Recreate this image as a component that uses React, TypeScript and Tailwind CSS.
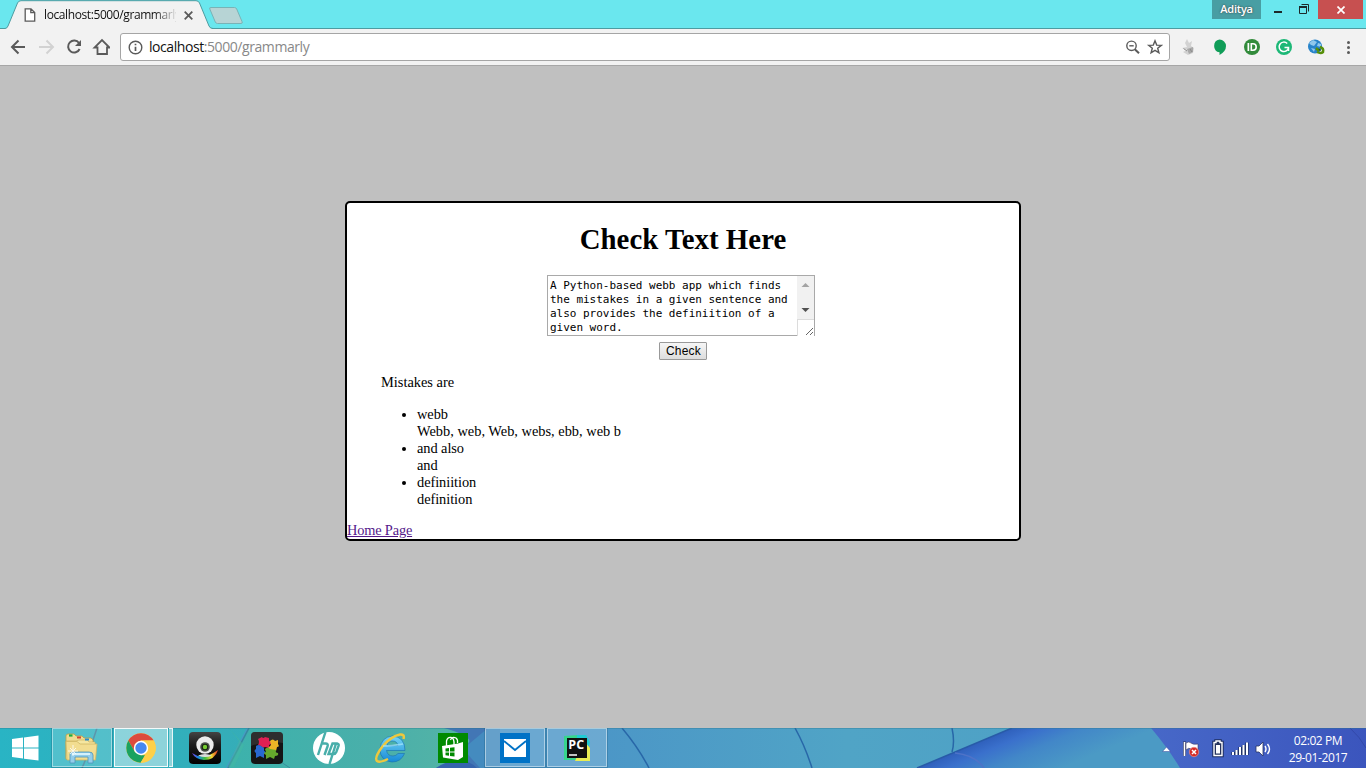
import React from "react";

const ui = "font-['Open_Sans','Noto_Sans',sans-serif]";

function Tab() {
  return (
    <div className="relative flex h-[29px] w-[212px] shrink-0 items-center">
      <svg className="absolute left-0 top-0" width="214" height="29" viewBox="0 0 214 29">
        <path d="M0 29V28.5H5Q7 28.5 8 26L17.500 3Q18.500 .7 21 .7H196Q198.500 .7 199.500 3L209 26Q210 28.500 212 28.500V29Z" fill="#f2f2f2" />
        <path d="M0 28.500H5Q7 28.500 8 26L17.500 3Q18.500 .7 21 .7H196Q198.500 .7 199.500 3L209 26Q210 28.500 213 28.500" fill="none" stroke="#4d9ca1" />
      </svg>
      <svg className="relative ml-[24px] mt-px" width="12" height="14" viewBox="0 0 12 14" fill="#fff" stroke="#5a5a5a" strokeWidth="1.3">
        <path d="M1.200 .8H7L10.700 4.500V13.200H1.200ZM6.800 .8V4.700H10.700" />
      </svg>
      <div className={`relative ml-[8px] mt-px w-[132px] overflow-hidden whitespace-nowrap text-[12px] leading-[18px] tracking-[-0.4px] text-[#111] [mask-image:linear-gradient(to_right,black_110px,transparent_134px)] ${ui}`}>
        localhost:5000/grammarly
      </div>
      <svg className="relative ml-[8px] mt-px" width="9" height="9" viewBox="0 0 9 9" stroke="#5a5a5a" strokeWidth="1.800">
        <path d="M.7 .7L8.300 8.300M8.300 .7L.7 8.300" />
      </svg>
    </div>
  );
}

function TitleBar() {
  return (
    <div className="flex h-[29px] items-start border-b border-[#4d9ca1] bg-[#6ae7ee]">
      <Tab />
      <svg className="ml-[-4px] mt-[6px]" width="36" height="19" viewBox="0 0 36 19">
        <path d="M3 1.500H26.500Q28 1.500 28.700 3L34 15.500Q35 17.500 33 17.500H9.500Q8 17.500 7.300 16L1.800 3Q1 1.500 3 1.500Z" fill="#b7d4d5" stroke="#78b3b6" />
      </svg>
      <div className="grow" />
      <div className={`flex h-[19px] w-[49px] items-center justify-center bg-[#489ea3] text-[11px] font-semibold tracking-[-0.25px] text-white [text-shadow:0_0_2px_#333] ${ui}`}>Aditya</div>
      <svg width="57" height="19" viewBox="0 0 57 19" fill="none" stroke="#1c292a">
        <path d="M13 12H21" strokeWidth="2" />
        <path d="M40.500 4.500H47.500V11.500M38.500 6.500H45.500V13.500H38.500Z" strokeWidth="1" />
        <path d="M38 7H46" strokeWidth="2" />
      </svg>
      <div className="mr-[3px] flex h-[19px] w-[45px] items-center justify-center bg-[#c75050]">
        <svg width="8" height="8" viewBox="0 0 8 8" stroke="white" strokeWidth="1.700"><path d="M.5 .5L7.500 7.500M7.500 .5L.5 7.500" /></svg>
      </div>
    </div>
  );
}

function Toolbar() {
  return (
    <div className="flex h-[37px] items-center border-b border-[#a7a7a7] bg-[#f2f2f2]">
      <svg className="ml-[10px]" width="100" height="20" viewBox="0 0 100 20" fill="none" stroke="#5a5a5a" strokeWidth="2">
        <path d="M15 10H2.500M8.500 3.500L2 10L8.500 16.500" />
        <path d="M29 10H42M36.500 3.500L43 10L36.500 16.500" stroke="#d2d2d2" />
        <path d="M69 6A6 6 0 1 0 69.600 12" />
        <path d="M71 3V9H65Z" fill="#5a5a5a" stroke="none" />
        <path d="M84.500 10.500H87.500V17H97V10.500H99.500L92 3L84.500 10.500Z" strokeWidth="1.800" />
      </svg>
      <div className="ml-[10px] flex h-[28px] w-[1050px] items-center rounded-[3px] border border-[#a5a5a5] bg-white">
        <svg className="ml-[7px]" width="15" height="15" viewBox="0 0 15 15" fill="none" stroke="#5a5a5a" strokeWidth="1.400">
          <circle cx="7.500" cy="7.500" r="6.300" /><path d="M7.500 6.700V11M7.500 3.700V5.300" strokeWidth="1.700" />
        </svg>
        <div className={`ml-[6px] whitespace-nowrap text-[14px] leading-[20px] tracking-[-0.43px] text-[#888] ${ui}`}><span className="text-[#111]">localhost</span>:5000/grammarly</div>
        <div className="grow" />
        <svg className="mr-[6px]" width="38" height="16" viewBox="0 0 38 16" fill="none" stroke="#5a5a5a" strokeWidth="1.400">
          <circle cx="6.500" cy="6.800" r="4.700" /><path d="M4.300 6.800H8.700" /><path d="M9.800 10.200L14 14.300" strokeWidth="2" />
          <path d="M30 1.800L31.700 6.100L36.300 6.400L32.700 9.300L33.900 13.800L30 11.300L26.100 13.800L27.300 9.300L23.700 6.400L28.300 6.100Z" />
        </svg>
      </div>
      <svg className="ml-[10px]" width="180" height="24" viewBox="0 0 180 24">
        <g>
          <path d="M7 4L9 8L12 6L11 11L14 13L13 18L8 20L3 17L7 15L2 13L7 12L5 8Z" fill="#d2d2d2" />
          <path d="M7 14L13 12V17L9 19Z" fill="#a8a8a8" /><path d="M3.500 13.500L7 16M10 14L12 17" stroke="#8b8b8b" />
        </g>
        <path d="M39.500 4.500A6.500 6.500 0 0 0 39.500 17.300V20Q46 16.500 46 11A6.500 6.500 0 0 0 39.500 4.500Z" fill="#109d58" />
        <circle cx="72" cy="12" r="8" fill="#328b3b" />
        <rect x="67.500" y="8" width="1.700" height="8" fill="#fff" />
        <path d="M71.300 8.800H73A3.200 3.200 0 0 1 73 15.200H71.300Z" fill="none" stroke="white" strokeWidth="1.600" />
        <circle cx="104" cy="12" r="8" fill="#1db877" />
        <path d="M107.200 8.500A4.700 4.700 0 1 0 108.500 12.500H104.500M108.500 12.500V16" fill="none" stroke="white" strokeWidth="1.500" />
        <circle cx="135" cy="11.500" r="7" fill="#2884ca" />
        <path d="M129 8L133 5L137 7L134 11L131 10ZM138 8L141 9V12L137 11ZM131 13L135 14L134 17Z" fill="#90c8ec" />
        <path d="M136 13L139 16M140 12Q144 13 143 17Q141 19 137 17" stroke="#57900a" fill="none" strokeWidth="2.500" /><path d="M138.500 14Q141 14 140 16" stroke="#234d11" fill="none" strokeWidth="1" />
        <g fill="#5a5a5a"><circle cx="168.500" cy="7.500" r="1.500" /><circle cx="168.500" cy="12.500" r="1.500" /><circle cx="168.500" cy="17.500" r="1.500" /></g>
      </svg>
    </div>
  );
}

function CheckForm() {
  return (
    <div className="flex flex-col">
      <h1 className="mt-[19px] text-center text-[28.8px] font-bold leading-[34px] tracking-[0.05px]">Check Text Here</h1>
      <div className="ml-[200px] mt-[19px] flex h-[61px] w-[268px] border border-[#a9a9a9] bg-white">
        <div className="w-[249px] whitespace-pre pl-[2px] pt-[3px] font-['DejaVu_Sans_Mono',monospace] text-[11px] leading-[14px] tracking-[-0.02px]">
          {"A Python-based webb app which finds\nthe mistakes in a given sentence and\nalso provides the definiition of a\ngiven word."}
        </div>
        <div className="flex w-[17px] flex-col">
          <div className="h-[43px] bg-[#f1f1f1]">
            <svg width="17" height="43" viewBox="0 0 17 43"><path d="M4.500 11L8.500 7L12.500 11Z" fill="#a3a3a3" /><path d="M4.500 32L8.500 36L12.500 32Z" fill="#505050" /></svg>
          </div>
          <div className="h-[17px] border-l border-t border-[#dcdcdc] bg-white">
            <svg width="16" height="16" viewBox="0 0 16 16" stroke="#666"><path d="M8 15L15 8M12 15L15 12" strokeWidth="1" /></svg>
          </div>
        </div>
      </div>
      <button className="mt-[6px] h-[18px] w-[48px] self-center rounded-[1px] border border-[#999] bg-linear-to-b from-[#f6f6f6] to-[#dddddd] pl-px font-['Liberation_Sans',sans-serif] text-[12px] leading-[15px] tracking-[0.2px]">Check</button>
    </div>
  );
}

const mistakes = [
  ["webb", "Webb, web, Web, webs, ebb, web b"],
  ["and also", "and"],
  ["definiition", "definition"],
];

function Card() {
  return (
    <main className="flex h-[340px] w-[676px] flex-col rounded-[5px] border-2 border-black bg-white font-['Liberation_Serif',serif] text-[14.4px] leading-[17px] text-black">
      <CheckForm />
      <p className="ml-[34px] mt-[14px]">Mistakes are</p>
      <ul className="ml-[70px] mt-[15px] list-disc">
        {mistakes.map(([word, fix]) => (
          <li key={word} className="tracking-[-0.07px]">{word}<br /><span className={fix.length > 10 ? "tracking-[0px]" : ""}>{fix}</span></li>
        ))}
      </ul>
      <a className="mt-[14px] self-start tracking-[-0.18px] text-[#551a8b] underline">Home Page</a>
    </main>
  );
}

function Slot({ active = false, children }: { active?: boolean; children: React.ReactNode }) {
  return (
    <div className="flex w-[62px] items-center justify-center px-px pb-px">
      <div className={active ? "flex h-[39px] w-[60px] items-center justify-center border border-white/45 bg-white/18 outline outline-[#18517044]" : "flex h-[39px] w-[60px] items-center justify-center"}>{children}</div>
    </div>
  );
}

function Wallpaper() {
  return (
    <svg className="absolute inset-0" width="1366" height="40" viewBox="0 0 1366 40">
      <defs>
        <linearGradient id="teal"><stop stopColor="#29b4c4" /><stop offset="1" stopColor="#35adb8" /></linearGradient>
        <linearGradient id="green"><stop stopColor="#3cb2ac" /><stop offset=".55" stopColor="#4aafaa" /><stop offset="1" stopColor="#58b6a4" /></linearGradient>
        <linearGradient id="blue"><stop stopColor="#4b95c7" /><stop offset=".42" stopColor="#4b95c7" /><stop offset=".62" stopColor="#50a4c6" /><stop offset="1" stopColor="#4b9cc5" /></linearGradient>
        <linearGradient id="ray" gradientUnits="userSpaceOnUse" x1="965" y1="20" x2="987" y2="72"><stop stopColor="#2f60bc" /><stop offset=".2" stopColor="#3a70cc" /><stop offset=".5" stopColor="#4287c8" /><stop offset="1" stopColor="#4b9ac5" /></linearGradient>
        <linearGradient id="night"><stop stopColor="#4768c8" /><stop offset="1" stopColor="#3b55bd" /></linearGradient>
      </defs>
      <rect width="1366" height="40" fill="url(#blue)" />
      <path d="M0 0H247L226 40H0Z" fill="url(#teal)" />
      <path d="M250 0H500L452 40H229Z" fill="url(#green)" />
      <path d="M97 0Q91 20 82 40" stroke="#397f99" fill="none" strokeWidth="1.500" />
      <path d="M249 0L228 40" stroke="#338c9b" strokeWidth="1.500" />
      <path d="M229 0L244 17L234 39H228L239 13Z" fill="#44b9a2" opacity=".5" />
      <path d="M275 30L290 40" stroke="#368f9c" />
      <path d="M444 0Q472 8 469 14Q460 30 436 40H488V0Z" fill="#4276b5" />
      <path d="M436 40Q460 24 477 40Z" fill="#3664ad" />
      <path d="M488 0L463 21L480 40H500V0Z" fill="#448bbf" />
      <path d="M622 0Q638 19 649 40M795 0Q805 18 812 40M952 0Q955 14 952 24" stroke="#2867a8" fill="none" strokeWidth="1.500" />
      <path d="M917 40L1012 0H1180V40Z" fill="url(#ray)" />
      <path d="M917 40L1012 0" stroke="#285ba8" strokeWidth="1.500" />
      <path d="M955 25Q975 27 984 40" stroke="#4f73c8" fill="none" strokeWidth="1.500" />
      <path d="M1151 0Q1168 20 1180 40H1366V0Z" fill="url(#night)" />
      <path d="M1350 0Q1360 9 1366 20" stroke="#3348a9" fill="none" />
      <path d="M0 .5H1366" stroke="#2b7890" opacity=".35" />
    </svg>
  );
}

function ExplorerIcon() {
  return (
    <svg className="-ml-[2px]" width="34" height="32" viewBox="0 0 34 32">
      <path d="M2 27V4Q2 2 4 2H10L12 4H18L20 6H27L29 8V27Z" fill="#efdc92" stroke="#bc9f44" strokeWidth=".8" />
      <path d="M2 9H12L15 8H23L25 10H31V27H2Z" fill="#f5e6a0" stroke="#c9ad56" strokeWidth=".6" />
      <path d="M5 3.500H8.500" stroke="#1aad42" strokeWidth="2.200" /><path d="M13 5.500H17" stroke="#d24332" strokeWidth="2" /><path d="M21 7.500H25" stroke="#278dce" strokeWidth="2" />
      <path d="M2 9.500H13L16 12H33L31.500 28H3Z" fill="#f2dd90" stroke="#cfb763" strokeWidth=".8" />
      <path d="M6 31V22Q6 20 9 20H25Q29 20 29 23V31H24V25H11V31Z" fill="#93cdea" stroke="#4c94ba" strokeWidth=".8" />
      <path d="M8 22H26" stroke="#d5f1fb" strokeWidth="2" />
      <path d="M9 13V24M4 19H14M6 16L12 22M12 16L6 22" stroke="#fff" opacity=".8" />
    </svg>
  );
}

function ChromeIcon() {
  return (
    <svg width="30" height="30" viewBox="0 0 30 30">
      <circle cx="15" cy="15" r="14.700" fill="#fdd049" />
      <path d="M2.300 7.600A14.700 14.700 0 0 1 27.700 7.600H15L8.600 11.300L8.600 18.500Z" fill="#dc4b3e" />
      <path d="M2.300 7.600L8.800 18.700L15 22.300H19L14.600 29.700A14.700 14.700 0 0 1 2.300 7.600Z" fill="#1aa260" />
      <path d="M15 7.600H27.700A14.700 14.700 0 0 1 14.600 29.700L21.500 18.500Z" fill="#fdd049" />
      <circle cx="15" cy="15" r="7.200" fill="#fff" /><circle cx="15" cy="15" r="5.700" fill="#4688f1" />
    </svg>
  );
}

function WebcamIcon() {
  return (
    <svg width="32" height="32" viewBox="0 0 32 32">
      <defs>
        <linearGradient id="glow"><stop stopColor="#7b35e0" /><stop offset=".25" stopColor="#168fe0" /><stop offset=".5" stopColor="#40be40" /><stop offset=".75" stopColor="#ead830" /><stop offset="1" stopColor="#e02a24" /></linearGradient>
        <linearGradient id="dark" x2="0" y2="1"><stop stopColor="#444" /><stop offset=".4" stopColor="#1c1c1c" /><stop offset="1" stopColor="#000" /></linearGradient>
      </defs>
      <rect width="32" height="32" rx="4" fill="url(#dark)" />
      <path d="M3 21Q14 29 29 18Q26 28 15 28Q6 27 3 21Z" fill="url(#glow)" />
      <circle cx="16" cy="13" r="8.700" fill="#ececec" /><circle cx="16" cy="15" r="4.800" fill="#4b5149" /><circle cx="16" cy="15" r="3.300" fill="#172211" /><circle cx="16" cy="15" r="2.200" fill="#76cd32" />
      <path d="M9 23.500Q16 20.500 23 23.500Q16 26.500 9 23.500" fill="#ddd" />
    </svg>
  );
}

function PuzzleIcon() {
  return (
    <svg width="32" height="32" viewBox="0 0 32 32">
      <rect width="32" height="32" rx="4" fill="#151515" /><path d="M0 4Q0 0 4 0H28Q32 0 32 4V11Q16 8 0 14Z" fill="#555" opacity=".4" />
      <path d="M7 7L11 5Q12 7 14 5L18 6V9Q21 9 20 12L18 13V16L14 15Q11 17 10 14L7 13Q9 10 7 7Z" fill="#df2053" />
      <path d="M19 9Q22 6 24 9L27 8V12Q29 15 26 15L25 19L21 18Q18 19 17 16L20 13Z" fill="#edb526" />
      <path d="M5 14Q8 12 10 14L13 16V19Q16 20 13 22V26L9 24L5 26V21Q2 19 5 17Z" fill="#2968d0" />
      <path d="M14 17Q17 14 19 17L25 18Q24 21 27 21Q28 24 24 24L23 27L19 25L15 27V23Q11 21 15 20Z" fill="#65a82d" />
    </svg>
  );
}

function HpIcon() {
  return (
    <svg width="32" height="32" viewBox="0 0 32 32">
      <circle cx="16" cy="16" r="16" fill="#fff" />
      <path d="M12.500 0L5 23M8.500 11.500H12.500Q15.500 11.500 14.500 14.500L11.500 23M16.500 32L23 11.500H19.500L15.500 22H20.500Q22.500 22 23.300 20L25.500 14Q26.500 11.500 23 11.500" fill="none" stroke="#48aeaa" strokeWidth="2.400" />
    </svg>
  );
}

function IeIcon() {
  return (
    <svg width="34" height="32" viewBox="0 0 34 32">
      <defs><linearGradient id="ie" x2="0" y2="1"><stop stopColor="#75d6f7" /><stop offset="1" stopColor="#1689d6" /></linearGradient></defs>
      <path fillRule="evenodd" d="M31 18.500H12.500Q13.500 24 19 24Q22 24 24 21.500H30.500Q27 30 18 30Q6 29 6 17Q7 5 18.500 4Q31 5 31 18.500ZM13 13.500H24Q23 9 18.500 9Q14 9 13 13.500Z" fill="url(#ie)" stroke="#176eaf" strokeWidth=".6" />
      <path d="M29.500 7Q31 2 26 2.500Q17 4 8 15Q0 26 3 29Q6 31 14 27" fill="none" stroke="#edc83e" strokeWidth="2.500" />
      <path d="M9 14Q17 14 29 12" fill="none" stroke="#a9e7fb" strokeWidth="1.500" opacity=".7" />
    </svg>
  );
}

function StoreIcon() {
  return (
    <svg width="30" height="30" viewBox="0 0 30 30">
      <rect width="30" height="30" fill="#008a00" />
      <path d="M4 13L20 10.500L25 9V24L20 27L5 24.500Z" fill="#fff" />
      <path d="M8.500 13V8Q9.500 4 13 4.500Q16.500 5 16 12M12.500 7Q14 3 18 5Q20 6.500 19.500 10" fill="none" stroke="#fff" strokeWidth="1.300" />
      <path d="M7.500 15.500L11 15V18.500H7.500ZM12 14.800L16.500 14.200V18.500H12ZM7.500 19.500H11V22.700L7.500 22.200ZM12 19.500H16.500V23.600L12 22.900Z" fill="#008a00" />
    </svg>
  );
}

function TaskBar() {
  return (
    <footer className="relative h-[40px] overflow-hidden">
      <Wallpaper />
      <div className="relative flex h-[40px] items-stretch">
        <div className="flex w-[51px] items-center">
          <svg className="ml-[11px]" width="28" height="26" viewBox="0 0 28 26" fill="#fff"><path d="M1 4L12 2.500V12.500H1ZM13 2.400L27.500 .4V12.500H13ZM1 13.500H12V23.500L1 22ZM13 13.500H27.500V25.600L13 23.700Z" /></svg>
        </div>
        <Slot active><ExplorerIcon /></Slot>
        <div className="flex w-[61px] gap-px px-px pb-px">
          <div className="flex h-[39px] w-[54px] items-center justify-center border border-white/90 bg-white/45"><ChromeIcon /></div>
          <div className="h-[39px] w-[4px] border border-l-0 border-white/80 bg-white/45" />
        </div>
        <Slot><WebcamIcon /></Slot>
        <Slot><PuzzleIcon /></Slot>
        <Slot><HpIcon /></Slot>
        <Slot><IeIcon /></Slot>
        <Slot><StoreIcon /></Slot>
        <Slot active>
          <svg width="30" height="30" viewBox="0 0 30 30"><path fill="#0072c6" d="M0 0H30V30H0Z" /><path fill="#fff" d="M4 6H26V24H4Z" /><path d="M4 8L15 17L26 8" fill="none" stroke="#0072c6" strokeWidth="1.800" /></svg>
        </Slot>
        <Slot active>
          <svg width="26" height="26" viewBox="0 0 26 26">
            <path d="M0 1L14 0L16 25H0Z" fill="#37d58d" /><path d="M13 0H22L26 7L23 18H12Z" fill="#20cbd5" /><path d="M20 6L26 13V26H11L15 17Z" fill="#e9ed54" />
            <path d="M3 3H23V23H3Z" fill="#111" /><path d="M5 20H13" stroke="#fff" strokeWidth="1.500" />
            <text x="4.300" y="13.700" fill="#fff" fontFamily="Open Sans" fontWeight="700" fontSize="12.500">PC</text>
          </svg>
        </Slot>
        <div className="grow" />
        <svg className="mt-[9px]" width="115" height="24" viewBox="0 0 115 24">
          <path d="M.5 14.500L4.500 10L8.500 14.500Z" fill="#fff" stroke="#34489c" strokeWidth=".5" />
          <path d="M22.500 4.500V19" stroke="#26305e" strokeWidth="3" /><path d="M22.500 5V19" stroke="#fff" strokeWidth="1.700" /><path d="M24 6Q27 4 29 6T36 7V13Q31 14 29 12T24 13Z" fill="#fff" stroke="#3a3b64" strokeWidth=".6" />
          <circle cx="32" cy="15" r="4.700" fill="#d52c27" stroke="#eb9087" strokeWidth=".7" /><path d="M30 13L34 17M34 13L30 17" stroke="#fff" strokeWidth="1.500" />
          <path d="M52 5.500H54V4H58V5.500H60V18.500H52Z" fill="none" stroke="#1f2f60" strokeWidth="3.500" /><path d="M52 5.500H54V4H58V5.500H60V18.500H52Z" fill="#26345e" stroke="#fff" strokeWidth="1.400" /><path d="M54 8H58V16.500H54Z" fill="#fff" />
          <path d="M71 15V18M74.500 13V18M78 10V18M81.500 8V18M85 5.500V18" stroke="#1f3268" strokeWidth="3.500" /><path d="M71 15V18M74.500 13V18M78 10V18M81.500 8V18M85 5.500V18" stroke="#fff" strokeWidth="2" />
          <path d="M94 9H97L101 5V19L97 15H94Z" fill="#fff" stroke="#263463" strokeWidth=".8" /><path d="M103 9Q105 12 103 15M105.500 7Q109.500 12 105.500 17" fill="none" stroke="#fff" strokeWidth="1.400" />
        </svg>
        <div className={`ml-[5px] mr-[12px] mt-[4px] w-[72px] whitespace-nowrap text-center text-[12px] leading-[17px] tracking-[-0.4px] text-white ${ui}`}><div>02:02 PM</div><div>29-01-2017</div></div>
      </div>
    </footer>
  );
}

export default function App() {
  return (
    <div className="flex h-[768px] w-[1366px] flex-col overflow-hidden">
      <TitleBar />
      <Toolbar />
      <div className="flex h-[662px] items-start justify-center bg-[#c0c0c0] pt-[135px]"><Card /></div>
      <TaskBar />
    </div>
  );
}
